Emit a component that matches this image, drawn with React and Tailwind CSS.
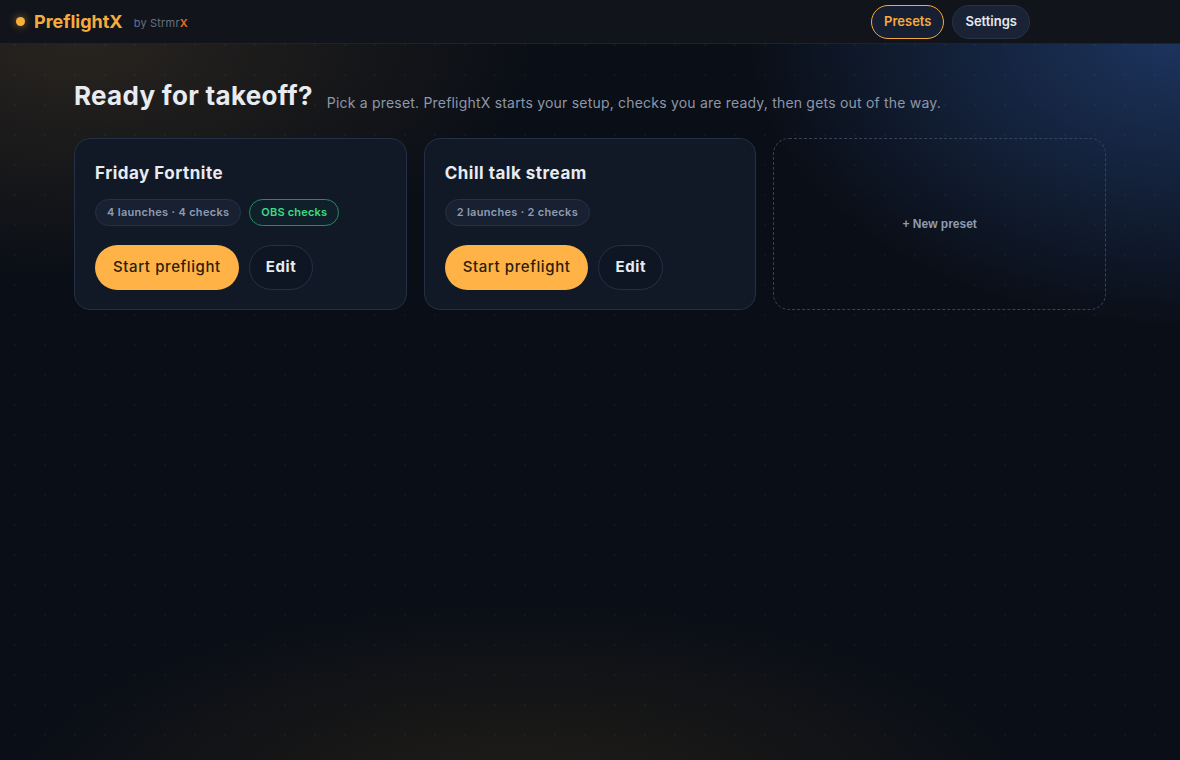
import { useState } from "react";

const presets = [
    { id: 1, name: "Friday Fortnite", launches: 4, checks: 4, obs: true },
    { id: 2, name: "Chill talk stream", launches: 2, checks: 2, obs: false },
];

function Header({ tab, setTab }) {
    return (
        <header className="h-[44px] flex items-center justify-between pl-4 pr-[150px] bg-[#11141b] border-b border-[#1d2230]">
            <div className="flex items-center">
                <span className="w-[9px] h-[9px] rounded-full bg-[#fbb03b] shadow-[0_0_8px_rgba(251,176,59,0.6)]" />
                <span className="ml-[9px] text-[18px] font-bold text-[#f7ab3d]">PreflightX</span>
                <span className="ml-[11px] mt-[3px] text-[11px] text-[#667085] tracking-[0.2px]">
                    by Strmr<span className="text-[#f26b1d] font-semibold">X</span>
                </span>
            </div>
            <nav className="flex items-center gap-2">
                <button
                    onClick={() => setTab("presets")}
                    className={
                        tab === "presets"
                            ? "h-[34px] px-3 rounded-full border border-[#f5a93a] bg-[#172033] text-[13px] font-semibold text-[#f7ab3d]"
                            : "h-[34px] px-3 rounded-full border border-[#273247] bg-[#1a2335] text-[13px] font-semibold text-[#e6e9ef]"
                    }
                >
                    Presets
                </button>
                <button
                    onClick={() => setTab("settings")}
                    className={
                        tab === "settings"
                            ? "h-[34px] px-3 rounded-full border border-[#f5a93a] bg-[#172033] text-[13px] font-semibold text-[#f7ab3d]"
                            : "h-[34px] px-3 rounded-full border border-[#273247] bg-[#1a2335] text-[13px] font-semibold text-[#e6e9ef]"
                    }
                >
                    Settings
                </button>
            </nav>
        </header>
    );
}

function PresetCard({ preset }) {
    return (
        <div className="h-[172px] rounded-2xl border border-[#243045] bg-[#111927] px-5 pt-[22px]">
            <div className="text-[17px] font-bold text-[#e8ebf0] leading-6 tracking-[0.5px]">{preset.name}</div>
            <div className="flex gap-2 mt-[14px]">
                <span className="h-[27px] px-[11px] flex items-center rounded-full border border-[#263145] bg-[#172131] text-[11px] font-semibold text-[#8f9bb0] tracking-[0.3px]">
                    {preset.launches} launches · {preset.checks} checks
                </span>
                {preset.obs && (
                    <span className="h-[27px] px-[11px] flex items-center rounded-full border border-[#1f8f62] bg-[#10202a] text-[11px] font-semibold text-[#3ddc84] tracking-[0.2px]">
                        OBS checks
                    </span>
                )}
            </div>
            <div className="flex gap-[10px] mt-[19px]">
                <button className="h-[45px] px-[18px] rounded-full bg-[#ffb347] text-[15px] font-medium text-[#2a1d0c] tracking-[0.6px]">
                    Start preflight
                </button>
                <button className="h-[45px] px-4 rounded-full border border-[#243045] bg-[#0f1623] text-[15px] font-bold text-[#e8ebf0] tracking-[0.6px]">
                    Edit
                </button>
            </div>
        </div>
    );
}

export default function App() {
    const [tab, setTab] = useState("presets");

    return (
        <div className="min-h-screen bg-[#0a0e16] bg-[radial-gradient(ellipse_460px_240px_at_80px_40px,rgba(70,58,40,0.5),transparent),radial-gradient(ellipse_440px_300px_at_1180px_30px,rgba(35,66,120,0.75),transparent),radial-gradient(ellipse_520px_200px_at_520px_800px,rgba(60,48,25,0.45),transparent)] font-['Inter',sans-serif]">
            <div className="min-h-screen bg-[radial-gradient(rgba(255,255,255,0.03)_1px,transparent_1px)] bg-[length:30px_30px]">
                <Header tab={tab} setTab={setTab} />

                <main className="w-[1032px] mx-auto pt-[32px]">
                    <div className="flex items-baseline gap-[14px]">
                        <h1 className="text-[26px] font-bold text-[#e8ebf0] tracking-[0.3px]">Ready for takeoff?</h1>
                        <p className="relative top-[3px] text-[14px] text-[#8d97a8] tracking-[0.2px]">
                            Pick a preset. PreflightX starts your setup, checks you are ready, then gets out of the way.
                        </p>
                    </div>

                    <div className="grid grid-cols-3 gap-[17px] mt-[23px]">
                        {presets.map((p) => (
                            <PresetCard key={p.id} preset={p} />
                        ))}
                        <button className="h-[172px] rounded-2xl border border-dashed border-[#34435c] bg-transparent text-[12px] font-bold text-[#8f9bb0] font-['Liberation_Sans',sans-serif]">
                            + New preset
                        </button>
                    </div>
                </main>
            </div>
        </div>
    );
}
